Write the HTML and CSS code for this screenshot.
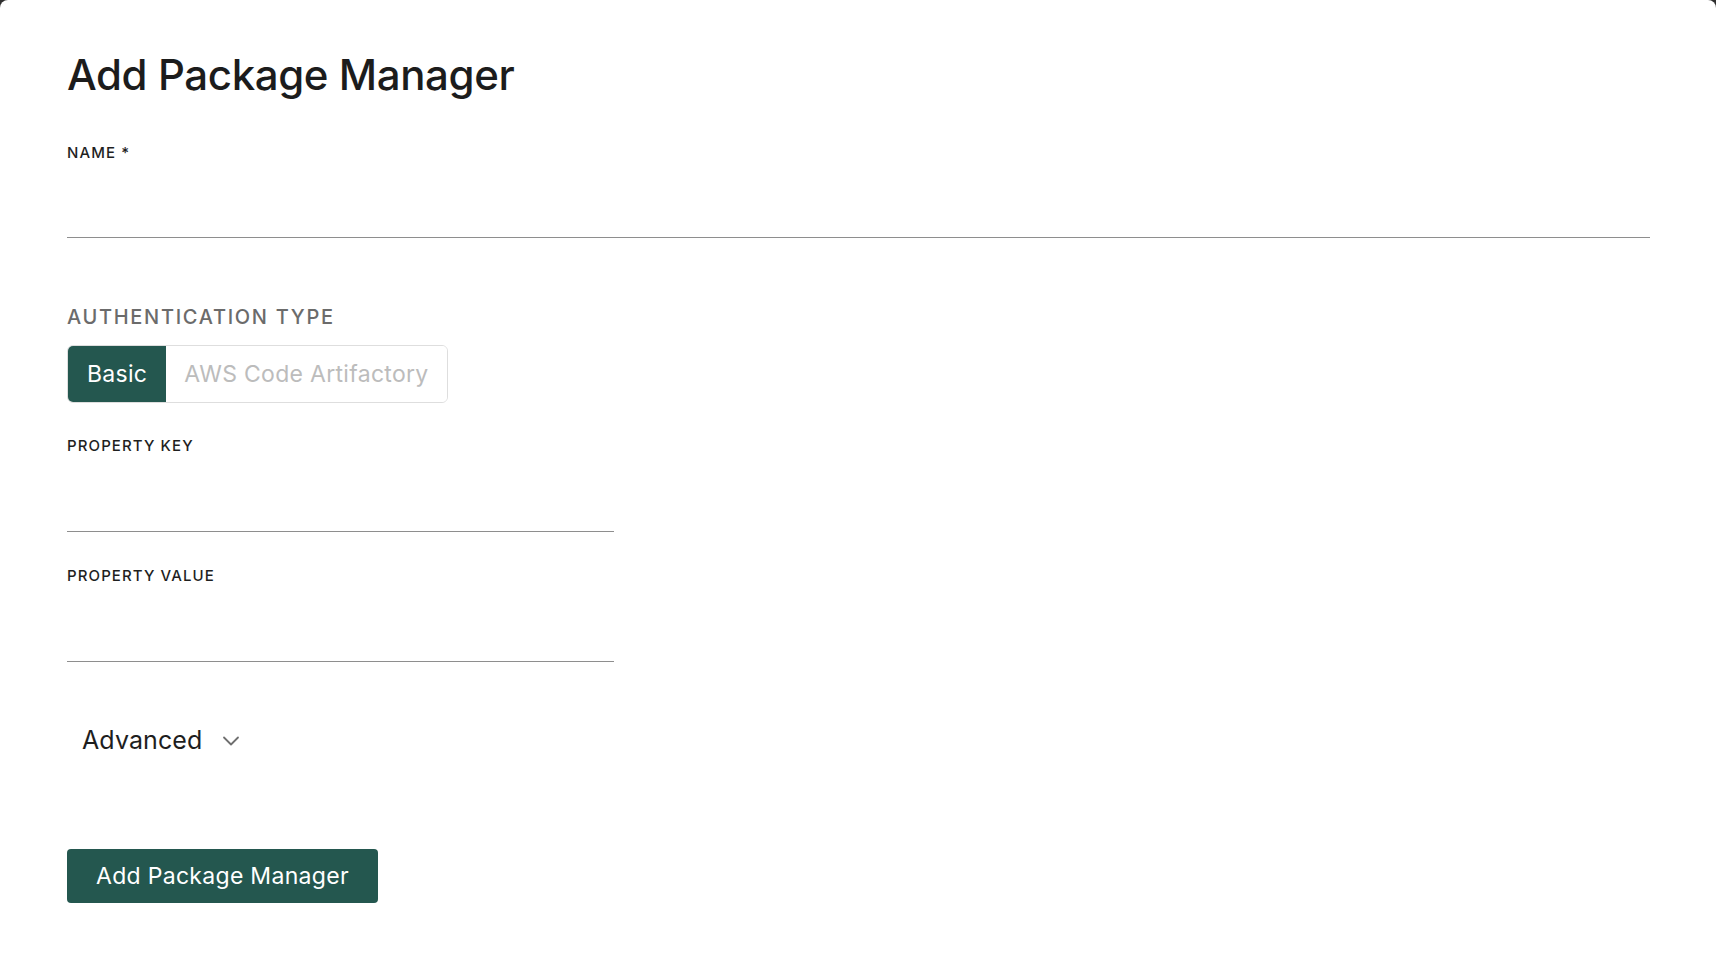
FILE: index.html
```html
<!DOCTYPE html>
<html lang="en">
<head>
<meta charset="utf-8">
<title>Add Package Manager</title>
<link rel="stylesheet" href="styles.css">
</head>
<body>
<div class="modal">
  <h1 class="title">Add Package Manager</h1>
  <div class="field field-name">
    <label class="label" for="name">NAME *</label>
    <input class="input" id="name" type="text">
  </div>
  <div class="auth">
    <div class="section-label">AUTHENTICATION TYPE</div>
    <div class="segmented">
      <button class="seg seg-active" type="button">Basic</button>
      <button class="seg" type="button">AWS Code Artifactory</button>
    </div>
  </div>
  <div class="field field-half field-key">
    <label class="label" for="pkey">PROPERTY KEY</label>
    <input class="input" id="pkey" type="text">
  </div>
  <div class="field field-half field-value">
    <label class="label" for="pval">PROPERTY VALUE</label>
    <input class="input" id="pval" type="text">
  </div>
  <div class="advanced">
    <span class="advanced-text">Advanced</span>
    <svg class="chevron" width="18" height="12" viewBox="0 0 18 12" aria-hidden="true">
      <path d="M2 2.5 L9 9.5 L16 2.5" fill="none" stroke="#6f6f6f" stroke-width="1.8" stroke-linecap="round" stroke-linejoin="round"/>
    </svg>
  </div>
  <div class="actions">
    <button class="primary" type="button">Add Package Manager</button>
  </div>
</div>
</body>
</html>
```
FILE: styles.css
```css
* { box-sizing: border-box; }
html, body { margin: 0; padding: 0; }
body {
  background: #2f2f2f;
  font-family: Inter, "Noto Sans", "Liberation Sans", sans-serif;
  color: #1e1e1e;
}
.modal {
  background: #ffffff;
  min-height: 962px;
  border-radius: 8px 8px 0 0;
  padding: 50px 66px 0 67px;
  display: flex;
  flex-direction: column;
}
.title {
  margin: 0;
  font-size: 42px;
  line-height: 50px;
  font-weight: 500;
  letter-spacing: -0.4px;
  color: #1c1c1c;
}
.field {
  display: flex;
  flex-direction: column;
}
.field-name { margin-top: 43px; }
.field-half { width: 547px; }
.field-half .input { height: 76px; }
.field-key { margin-top: 33px; }
.field-value { margin-top: 34px; }
.label {
  font-size: 15px;
  line-height: 20px;
  font-weight: 500;
  letter-spacing: 1.1px;
  color: #1f1f1f;
}
.input {
  border: none;
  border-bottom: 1px solid #8e8e8e;
  height: 75px;
  outline: none;
  background: transparent;
  font: inherit;
  padding: 0;
}
.auth {
  margin-top: 67px;
  display: flex;
  flex-direction: column;
  align-items: flex-start;
}
.section-label {
  font-size: 20px;
  line-height: 24px;
  font-weight: 500;
  letter-spacing: 1.7px;
  color: #6b6b6b;
}
.segmented {
  margin-top: 16px;
  display: flex;
  border: 1px solid #dedede;
  border-radius: 6px;
  overflow: hidden;
  height: 58px;
}
.seg {
  border: none;
  background: #ffffff;
  font-family: inherit;
  font-size: 23px;
  letter-spacing: 0.3px;
  color: #bcbcbc;
  padding: 0 18px;
  height: 100%;
}
.seg-active {
  background: #24574f;
  color: #ffffff;
  padding: 0 19px;
}
.advanced {
  margin-top: 63px;
  padding-left: 15px;
  display: flex;
  align-items: center;
  gap: 20px;
  height: 30px;
}
.advanced-text {
  font-size: 25px;
  line-height: 30px;
  letter-spacing: 0.1px;
  color: #1e1e1e;
}
.chevron { display: block; margin-top: 2px; }
.actions {
  margin-top: 94px;
}
.primary {
  background: #24574f;
  color: #ffffff;
  border: none;
  border-radius: 4px;
  height: 54px;
  padding: 0 29px;
  font-family: inherit;
  font-size: 23px;
  letter-spacing: 0.3px;
}
```
